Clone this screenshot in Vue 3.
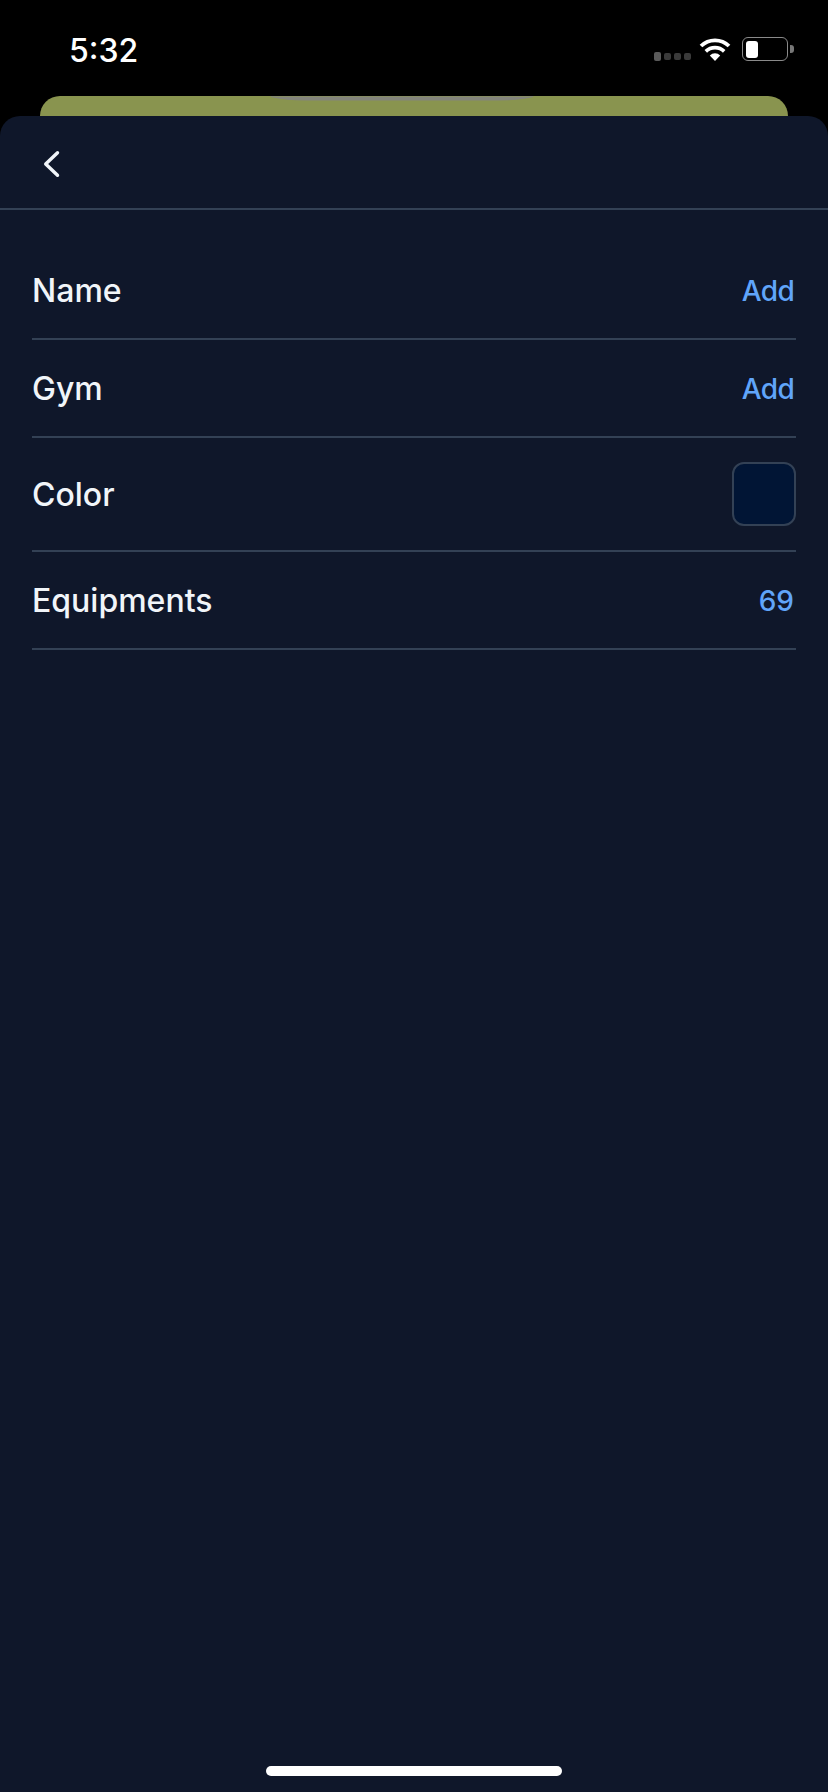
<script setup>
const rows = [
  { label: 'Name', value: 'Add', action: true },
  { label: 'Gym', value: 'Add', action: true },
  { label: 'Color', swatch: true },
  { label: 'Equipments', value: '69' }
];
</script>

<template>
  <div class="screen">
    <div class="status-bar">
      <span class="time">5:32</span>
      <div class="status-icons">
        <div class="signal">
          <i class="first"></i><i></i><i></i><i></i>
        </div>
        <svg class="wifi" width="32" height="24" viewBox="0 0 32 24">
          <path d="M16 24 L10.8 18.4 A7.6 7.6 0 0 1 21.2 18.4 Z" fill="#fff" />
          <path d="M6.8 14.4 A13.2 13.2 0 0 1 25.2 14.4" fill="none" stroke="#fff" stroke-width="3.6" />
          <path d="M2 9 A20 20 0 0 1 30 9" fill="none" stroke="#fff" stroke-width="3.8" />
        </svg>
        <div class="battery">
          <div class="battery-body"><div class="battery-level"></div></div>
          <div class="battery-tip"></div>
        </div>
      </div>
    </div>

    <div class="behind-card">
      <svg class="notch" width="264" height="5" viewBox="0 0 264 5">
        <path d="M1 0.5 Q15 4 36 4 L228 4 Q249 4 263 0.5" fill="#83847c" stroke="#83847c" stroke-width="1" />
      </svg>
    </div>

    <div class="sheet">
      <div class="sheet-header">
        <svg width="20" height="30" viewBox="0 0 20 30">
          <path d="M15.5 3.7 L3.7 15 L15.5 26.3" fill="none" stroke="#f1f5f9" stroke-width="3.4" stroke-linecap="round" stroke-linejoin="round" />
        </svg>
      </div>

      <div class="list">
        <div v-for="row in rows" :key="row.label" class="row">
          <span class="label">{{ row.label }}</span>
          <div v-if="row.swatch" class="swatch"></div>
          <span v-else class="value" :class="{ action: row.action }">{{ row.value }}</span>
        </div>
      </div>

      <div class="home-indicator"></div>
    </div>
  </div>
</template>

<style>
html, body {
  margin: 0;
  background: #000;
}
</style>

<style scoped>
.screen {
  width: 828px;
  height: 1792px;
  display: flex;
  flex-direction: column;
  background: #000;
  font-family: Inter, "Liberation Sans", sans-serif;
  overflow: hidden;
}

.status-bar {
  height: 96px;
  box-sizing: border-box;
  padding: 30px 34px 0 69px;
  display: flex;
  justify-content: space-between;
  align-items: flex-start;
}

.time {
  color: #fff;
  font-size: 32px;
  line-height: 42px;
  font-weight: 500;
}

.status-icons {
  display: flex;
  align-items: flex-end;
  margin-top: 7px;
}

.signal {
  display: flex;
  gap: 3px;
  align-items: center;
  margin-right: 8px;
}

.signal i {
  width: 7px;
  height: 7px;
  border-radius: 2px;
  background: #3a3a3a;
}

.signal .first {
  height: 9px;
  background: #5a5a5a;
}

.wifi {
  display: block;
  margin-right: 11px;
}

.battery {
  display: flex;
  align-items: center;
  gap: 2px;
}

.battery-body {
  width: 46px;
  height: 24px;
  box-sizing: border-box;
  border: 1.5px solid #8a8a8a;
  border-radius: 6px;
  padding: 2.5px 3px;
}

.battery-level {
  width: 12px;
  height: 100%;
  background: #fff;
  border-radius: 3px;
}

.battery-tip {
  width: 4px;
  height: 8px;
  background: #777;
  border-radius: 0 3px 3px 0;
}

.behind-card {
  height: 20px;
  margin: 0 40px;
  background: #89944f;
  border-radius: 20px 20px 0 0;
  display: flex;
  justify-content: center;
  align-items: flex-start;
  padding-right: 25px;
}

.notch {
  display: block;
}

.sheet {
  flex: 1;
  display: flex;
  flex-direction: column;
  background: #0f172a;
  border-radius: 20px 20px 0 0;
}

.sheet-header {
  height: 94px;
  box-sizing: border-box;
  border-bottom: 2px solid #334155;
  padding: 33px 0 0 42px;
}

.sheet-header svg {
  display: block;
}

.list {
  padding: 32px 32px 0;
}

.row {
  display: flex;
  justify-content: space-between;
  align-items: center;
  padding: 24px 0;
  min-height: 48px;
  border-bottom: 2px solid #334155;
}

.label {
  color: #f1f5f9;
  font-size: 32px;
  font-weight: 500;
  line-height: 46px;
  padding-top: 2px;
}

.value {
  color: #60a5fa;
  font-size: 28px;
  font-weight: 500;
  line-height: 46px;
  padding: 2px 2px 0 0;
}

.value.action {
  letter-spacing: -0.7px;
}

.swatch {
  width: 64px;
  height: 64px;
  box-sizing: border-box;
  background: #011535;
  border: 2px solid #334155;
  border-radius: 12px;
}

.home-indicator {
  width: 296px;
  height: 10px;
  margin: auto auto 16px;
  background: #fff;
  border-radius: 5px;
}
</style>
